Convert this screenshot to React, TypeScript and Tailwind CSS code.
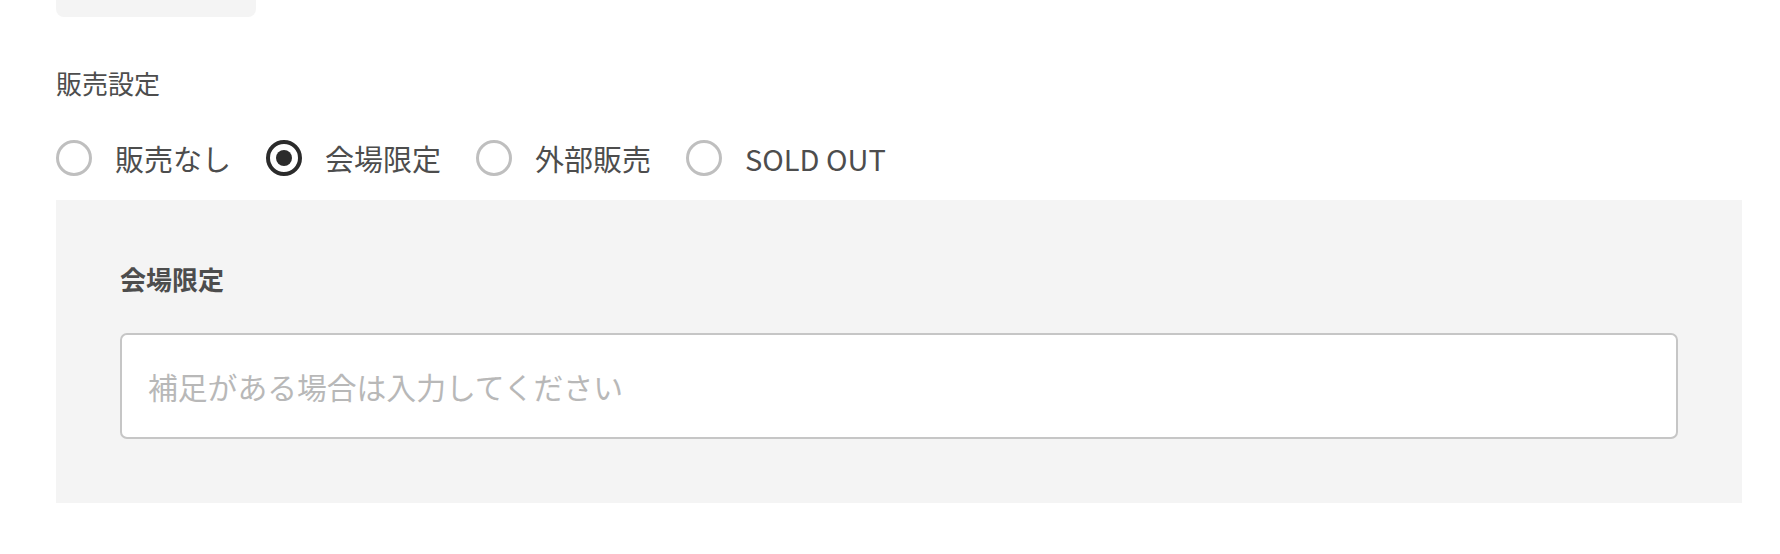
import React from "react";

const options = ["販売なし", "会場限定", "外部販売", "SOLD OUT"];

function Radio({ label, checked }: { label: string; checked: boolean }) {
  return (
    <label className="flex items-center gap-[23px] cursor-pointer">
      {checked ? (
        <span className="flex h-[36px] w-[36px] items-center justify-center rounded-full border-[4px] border-[#2b2b2b] bg-white">
          <span className="h-[16px] w-[16px] rounded-full bg-[#2b2b2b]" />
        </span>
      ) : (
        <span className="h-[36px] w-[36px] rounded-full border-[3px] border-[#bfbfbf] bg-white" />
      )}
      <span className="text-[29px] leading-[42px] text-[#4d4d4d]">{label}</span>
    </label>
  );
}

export default function App() {
  return (
    <div
      className="h-[554px] w-[1780px] bg-white pl-[56px] pr-[38px]"
      style={{ fontFamily: '"Noto Sans CJK JP", "Noto Sans", sans-serif' }}
    >
      <div className="h-[17px] w-[200px] rounded-b-[8px] bg-[#f4f4f4]" />
      <div className="mt-[47px] h-[38px] text-[26px] leading-[38px] text-[#4d4d4d]">販売設定</div>
      <div className="mt-[35px] flex h-[42px] items-center gap-[35px]">
        {options.map((o) => (
          <Radio key={o} label={o} checked={o === "会場限定"} />
        ))}
      </div>
      <div className="mt-[21px] bg-[#f4f4f4] px-[64px] pt-[60px] pb-[64px]">
        <div className="h-[38px] text-[26px] font-bold leading-[38px] text-[#4d4d4d]">会場限定</div>
        <div className="mt-[35px] flex h-[106px] items-center rounded-[7px] border-2 border-[#c6c6c6] bg-white pl-[26px] pr-[24px]">
          <input
            className="w-full bg-transparent text-[29.8px] text-[#4d4d4d] outline-none placeholder:text-[#b8b8b8]"
            placeholder="補足がある場合は入力してください"
          />
        </div>
      </div>
    </div>
  );
}
